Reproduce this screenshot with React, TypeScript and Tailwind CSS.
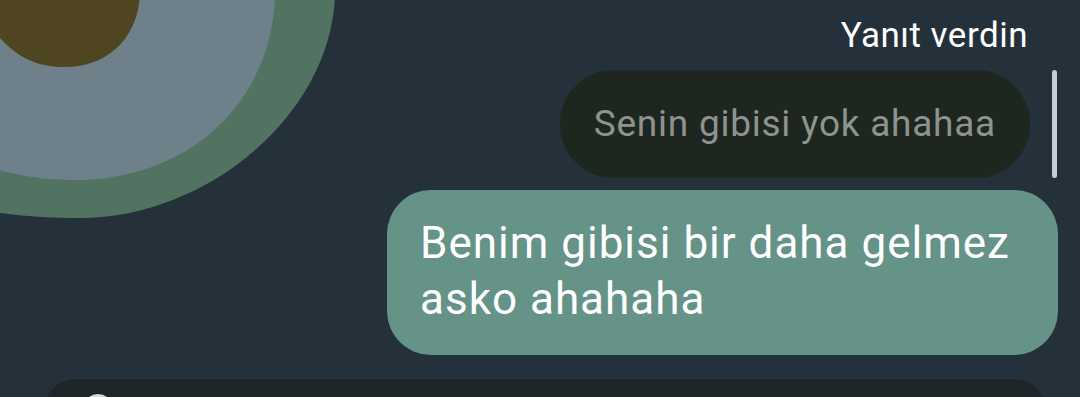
export default function App() {
  return (
    <div
      className="relative h-[397px] w-[1080px] overflow-hidden bg-[#24303a]"
      style={{ fontFamily: 'Roboto, "Noto Sans", sans-serif' }}
    >
      {/* wallpaper shapes */}
      <svg className="absolute left-0 top-0" width="360" height="240" viewBox="0 0 360 240">
        <path d="M 0 -10 L 335 -10 C 335 110 210 218 80 218 C 55 218 30 217 0 213 Z" fill="#527262" />
        <path d="M 0 -10 L 275 -10 C 275 100 190 180 75 180 C 45 180 20 176 0 170 Z" fill="#6e808a" />
        <path d="M 0 -10 L 140 -10 C 140 35 110 67 65 67 C 40 67 20 60 0 38 Z" fill="#4f4520" />
      </svg>

      <div className="relative flex flex-col items-end pr-[22px]">
        <div className="mt-[16px] pr-[30px] text-[35px] leading-[40px] tracking-[0.5px] text-white">Yanıt verdin</div>

        <div className="mt-[14px] mr-[28px] flex h-[108px] items-center whitespace-nowrap rounded-full bg-[#1e2620] px-[34px] text-[37px] tracking-[0.75px] text-[#8e938e]">
          Senin gibisi yok ahahaa
        </div>

        <div className="mt-[12px] w-[671px] rounded-[44px] bg-[#659387] px-[33px] pt-[25px] pb-[28px] text-[44px] leading-[56px] tracking-[1px] text-white">
          Benim gibisi bir daha gelmez
          <br />
          asko ahahaha
        </div>
      </div>

      {/* scrollbar */}
      <div className="absolute left-[1052px] top-[70px] h-[108px] w-[5px] rounded-full bg-[#c5ccd3]" />

      {/* input bar */}
      <div className="absolute left-[45px] top-[378px] h-[60px] w-[1000px] rounded-[44px] border-t border-[#2b3539] bg-[#1f2629]">
        <div className="ml-[38px] mt-[15px] h-[30px] w-[30px] rounded-full border-[3px] border-[#d6dad8]" />
      </div>
    </div>
  );
}
